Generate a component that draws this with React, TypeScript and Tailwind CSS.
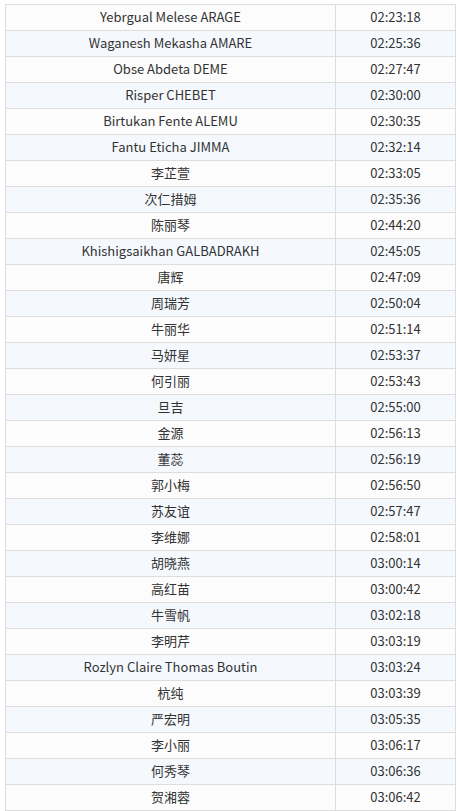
import React from 'react';

const rows: [string, string][] = [
  ['Yebrgual Melese ARAGE', '02:23:18'],
  ['Waganesh Mekasha AMARE', '02:25:36'],
  ['Obse Abdeta DEME', '02:27:47'],
  ['Risper CHEBET', '02:30:00'],
  ['Birtukan Fente ALEMU', '02:30:35'],
  ['Fantu Eticha JIMMA', '02:32:14'],
  ['李芷萱', '02:33:05'],
  ['次仁措姆', '02:35:36'],
  ['陈丽琴', '02:44:20'],
  ['Khishigsaikhan GALBADRAKH', '02:45:05'],
  ['唐辉', '02:47:09'],
  ['周瑞芳', '02:50:04'],
  ['牛丽华', '02:51:14'],
  ['马妍星', '02:53:37'],
  ['何引丽', '02:53:43'],
  ['旦吉', '02:55:00'],
  ['金源', '02:56:13'],
  ['董蕊', '02:56:19'],
  ['郭小梅', '02:56:50'],
  ['苏友谊', '02:57:47'],
  ['李维娜', '02:58:01'],
  ['胡晓燕', '03:00:14'],
  ['高红苗', '03:00:42'],
  ['牛雪帆', '03:02:18'],
  ['李明芹', '03:03:19'],
  ['Rozlyn Claire Thomas Boutin', '03:03:24'],
  ['杭纯', '03:03:39'],
  ['严宏明', '03:05:35'],
  ['李小丽', '03:06:17'],
  ['何秀琴', '03:06:36'],
  ['贺湘蓉', '03:06:42'],
];

export default function App() {
  return (
    <div className="bg-white min-h-screen pt-[4px] pl-[5px]">
      <div
        className="w-[451px] border-l border-r border-b border-[#dddddd] text-[13px] text-[#333333]"
        style={{ fontFamily: '"Noto Sans CJK SC", sans-serif' }}
      >
        {rows.map(([name, time], i) => (
          <div
            key={i}
            className={`flex h-[26px] border-t border-[#dddddd] ${i % 2 === 0 ? 'bg-[#fcfcfc]' : 'bg-[#f5f9fe]'}`}
          >
            <div className="w-[329px] flex items-center justify-center leading-none pb-[2px]">{name}</div>
            <div className="flex-1 flex items-center justify-center border-l border-[#dddddd] leading-none pb-[2px]">{time}</div>
          </div>
        ))}
      </div>
    </div>
  );
}
